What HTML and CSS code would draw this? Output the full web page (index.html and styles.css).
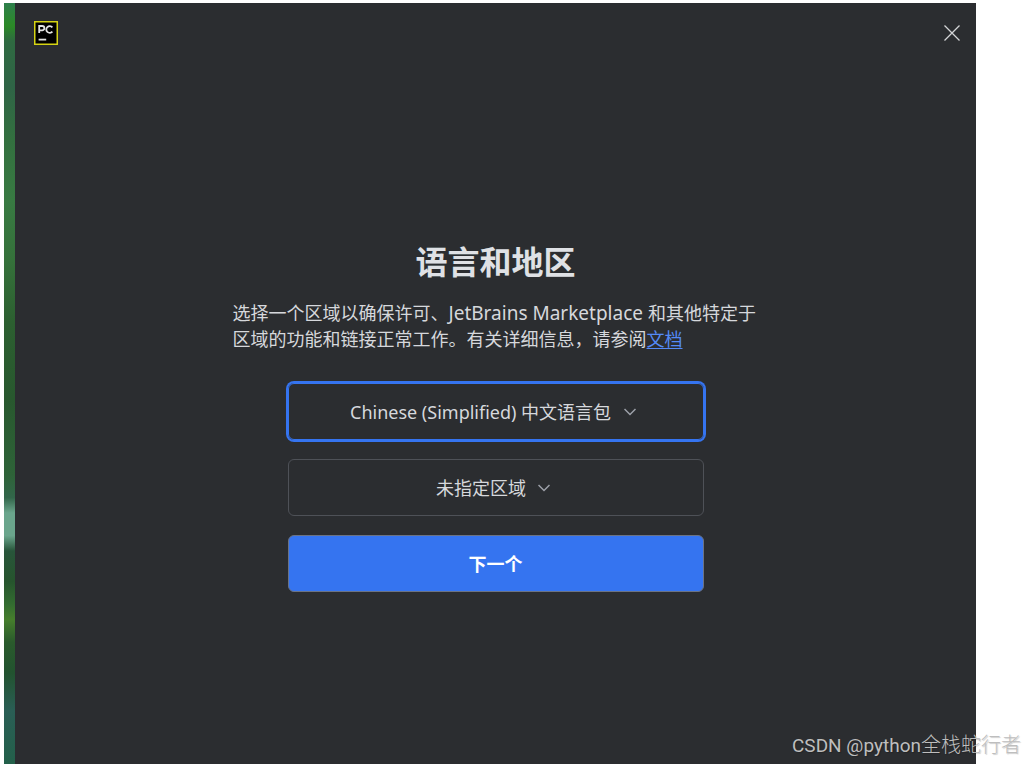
FILE: index.html
```html
<!DOCTYPE html>
<html lang="zh-CN">
<head>
<meta charset="utf-8">
<title>语言和地区</title>
<meta name="viewport" content="width=device-width, initial-scale=1">
<link rel="stylesheet" href="styles.css">
</head>
<body>
<div class="screen">
  <div class="wallpaper"></div>
  <div class="dialog">
    <header class="titlebar">
      <svg class="logo" viewBox="0 0 24 24" aria-label="PyCharm">
        <rect x="0.75" y="0.75" width="22.5" height="22.5" fill="#000" stroke="#d6d414" stroke-width="1.5"/>
        <g fill="none" stroke="#e4e4e4" stroke-width="1.8">
          <path d="M5.2 12V5h3a2.1 2.1 0 0 1 0 4.3H5.2"/>
          <path d="M18.4 6.3a3.5 3.3 0 1 0 0 4.4"/>
          <path d="M4.6 18.6h7.6"/>
        </g>
      </svg>
      <button class="close" type="button" aria-label="关闭">
        <svg viewBox="0 0 16 16"><path d="M0.5 0.5l15 15M15.5 0.5l-15 15"/></svg>
      </button>
    </header>
    <main class="content">
      <h1 class="title">语言和地区</h1>
      <p class="intro">选择一个区域以确保许可、<span class="latin">JetBrains Marketplace </span>和其他特定于区域的功能和链接正常工作。有关详细信息，请参阅<a class="link" href="#">文档</a></p>
      <form class="form">
        <label class="field field-focused">
          <select class="select" aria-label="语言">
            <option>Chinese (Simplified) 中文语言包</option>
          </select>
          <svg class="chevron" viewBox="0 0 12 8"><path d="M0.5 1l5.5 5.5L11.5 1"/></svg>
        </label>
        <label class="field">
          <select class="select" aria-label="区域">
            <option>未指定区域</option>
          </select>
          <svg class="chevron" viewBox="0 0 12 8"><path d="M0.5 1l5.5 5.5L11.5 1"/></svg>
        </label>
        <button class="next" type="button">下一个</button>
      </form>
    </main>
  </div>
  <div class="watermark"><span class="latin">CSDN @python</span>全栈蛇行者</div>
</div>
</body>
</html>
```
FILE: styles.css
```css
* {
  box-sizing: border-box;
}

body {
  margin: 0;
  background: #fff;
  color: #d6d8dc;
  font: 18px/26px "Noto Sans", "Noto Sans CJK SC", sans-serif;
}

.screen {
  position: relative;
  display: flex;
  min-height: 100vh;
  padding: 3px 49px 0 4px;
}

.wallpaper {
  flex: none;
  width: 11px;
  background: linear-gradient(#2f7f4c 0%, #2b8a26 3%, #2f6a41 5%, #2f6446 11%, #33703f 18%, #387a42 26%, #35713a 34%, #2c5f30 42%, #28582e 52%, #2e6338 62%, #32664a 65%, #6aa58c 67%, #6aa58c 70%, #28553a 72%, #26542d 76%, #336c30 79%, #467e2c 81%, #2a5a2c 84%, #22532f 88%, #2a5e55 93%, #23604a 100%);
}

.dialog {
  flex: 1;
  display: flex;
  flex-direction: column;
  background: #2b2d30;
}

.titlebar {
  display: flex;
  align-items: center;
  justify-content: space-between;
  padding: 18px 16px 18px 19px;
}

.logo {
  width: 24px;
  height: 24px;
}

.close {
  display: flex;
  padding: 0;
  border: 0;
  background: none;
}

.close svg {
  width: 16px;
  height: 16px;
  fill: none;
  stroke: #d4d5d7;
  stroke-width: 1.3;
}

.content {
  display: flex;
  flex-direction: column;
  align-items: center;
  padding: 175px 16px 0;
}

.title {
  margin: 0 0 14px;
  color: #dfe1e5;
  font-size: 32px;
  line-height: 48px;
  font-weight: 700;
}

.latin {
  font-size: 19px;
  font-weight: 400;
}

.intro {
  width: 100%;
  max-width: 526px;
  margin: 0 0 31px;
}

.link {
  color: #548af7;
  text-underline-offset: 2px;
}

.form {
  display: flex;
  flex-direction: column;
  gap: 19px;
  width: 100%;
  max-width: 416px;
}

.field {
  display: flex;
  align-items: center;
  justify-content: center;
  gap: 12px;
  height: 57px;
  padding-right: 5px;
  border: 1px solid #4e5157;
  border-radius: 6px;
}

.field-focused {
  border-color: #3574f0;
  box-shadow: 0 0 0 2px #3574f0;
}

.select {
  appearance: none;
  padding: 0;
  border: 0;
  outline: 0;
  background: none;
  color: inherit;
  font: inherit;
}

.chevron {
  width: 12px;
  height: 8px;
  fill: none;
  stroke: #9da0a8;
  stroke-width: 1.5;
  pointer-events: none;
}

.next {
  height: 57px;
  border: 1px solid #6b7384;
  border-radius: 6px;
  background: #3574f0;
  color: #fff;
  font: inherit;
  font-weight: 700;
}

.watermark {
  position: absolute;
  right: 4px;
  bottom: 5px;
  color: #bebebe;
  font: 20px/26px Roboto, "Noto Sans CJK SC", sans-serif;
  font-weight: 300;
  text-shadow: 1px 1px 1px rgba(0, 0, 0, 0.2);
}
```
